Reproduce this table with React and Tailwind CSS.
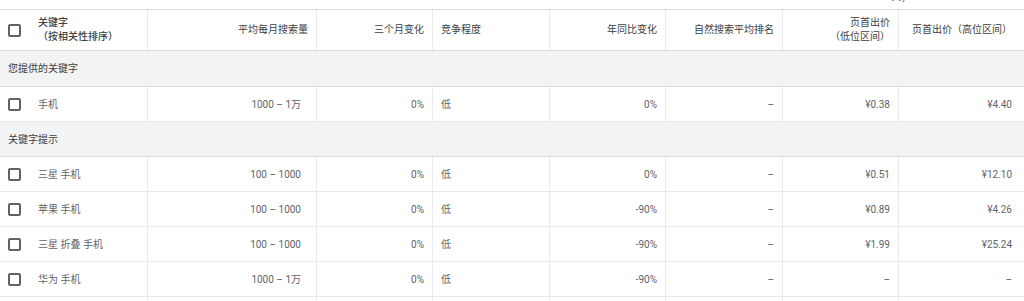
import React from 'react';

const cols = 'grid grid-cols-[147px_169px_116px_117px_116px_117px_116px_126px]';

const Checkbox = () => (
  <span className="inline-block h-[13px] w-[13px] shrink-0 rounded-[2px] border-2 border-[#5f6368]" />
);

const sections = [
  {
    title: '您提供的关键字',
    first: true,
    rows: [['手机', '1000 – 1万', '0%', '低', '0%', '–', '¥0.38', '¥4.40']],
  },
  {
    title: '关键字提示',
    rows: [
      ['三星 手机', '100 – 1000', '0%', '低', '0%', '–', '¥0.51', '¥12.10'],
      ['苹果 手机', '100 – 1000', '0%', '低', '-90%', '–', '¥0.89', '¥4.26'],
      ['三星 折叠 手机', '100 – 1000', '0%', '低', '-90%', '–', '¥1.99', '¥25.24'],
      ['华为 手机', '1000 – 1万', '0%', '低', '-90%', '–', '–', '–'],
    ],
  },
];

function HeaderRow() {
  return (
    <div className={`${cols} h-[42px] border-y border-[#dadce0] text-[#3c4043] leading-[14px]`}>
      <div className="flex items-center pl-2">
        <Checkbox />
        <div className="ml-[17px] font-medium">
          <div>关键字</div>
          <div>（按相关性排序）</div>
        </div>
      </div>
      <div className="flex items-center justify-end border-l border-[#e8eaed] pr-2">平均每月搜索量</div>
      <div className="flex items-center justify-end border-l border-[#e8eaed] pr-2">三个月变化</div>
      <div className="flex items-center border-l border-[#e8eaed] pl-2">竞争程度</div>
      <div className="flex items-center justify-end border-l border-[#e8eaed] pr-2">年同比变化</div>
      <div className="flex items-center justify-end border-l border-[#e8eaed] pr-2">自然搜索平均排名</div>
      <div className="flex items-center justify-end border-l border-[#e8eaed] pr-2 text-right">
        <div>
          <div>页首出价</div>
          <div>（低位区间）</div>
        </div>
      </div>
      <div className="flex items-center justify-end border-l border-[#e8eaed] pr-[12px]">页首出价（高位区间）</div>
    </div>
  );
}

function DataRow({ row }) {
  const [kw, avg, three, comp, yoy, rank, low, high] = row;
  return (
    <div className={`${cols} h-[35px] border-b border-[#e8eaed] text-[#5f6368]`}>
      <div className="flex items-center pl-2">
        <Checkbox />
        <span className="ml-[17px]">{kw}</span>
      </div>
      <div className="flex items-center justify-end border-l border-[#e8eaed] pr-[15px]">{avg}</div>
      <div className="flex items-center justify-end border-l border-[#e8eaed] pr-2">{three}</div>
      <div className="flex items-center border-l border-[#e8eaed] pl-2">{comp}</div>
      <div className="flex items-center justify-end border-l border-[#e8eaed] pr-2">{yoy}</div>
      <div className="flex items-center justify-end border-l border-[#e8eaed] pr-2">{rank}</div>
      <div className="flex items-center justify-end border-l border-[#e8eaed] pr-2">{low}</div>
      <div className="flex items-center justify-end border-l border-[#e8eaed] pr-[12px]">{high}</div>
    </div>
  );
}

export default function App() {
  return (
    <div
      className="h-[301px] w-[1024px] overflow-hidden bg-white text-[10px]"
      style={{ fontFamily: 'Roboto, "Noto Sans CJK SC", sans-serif' }}
    >
      {/* clipped tail of the toolbar above */}
      <div className="h-[9px] overflow-hidden">
        <div className="-mt-[9px] pl-[891px] text-[11px] leading-[12px] text-[#5f6368]">列)</div>
      </div>

      <HeaderRow />

      {sections.map((s) => (
        <div key={s.title}>
          <div
            className={`flex items-center border-b border-[#dadce0] bg-[#f1f3f4] pl-2 text-[#3c4043] ${
              s.first ? 'h-[36px]' : 'h-[35px]'
            }`}
          >
            {s.title}
          </div>
          {s.rows.map((r) => (
            <DataRow key={r[0]} row={r} />
          ))}
        </div>
      ))}

      <DataRow row={['', '', '', '', '', '', '', '']} />
    </div>
  );
}
